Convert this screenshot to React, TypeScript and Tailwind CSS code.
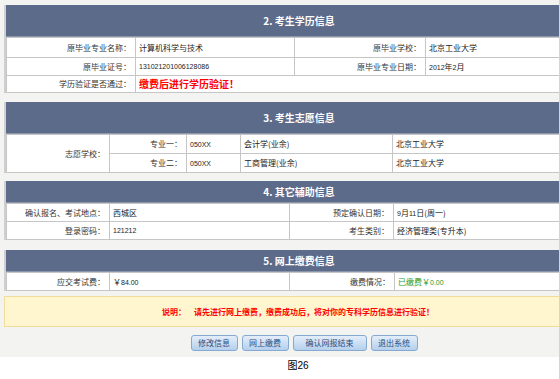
const cjk = { fontFamily: '"SimSun", "Noto Sans CJK SC", sans-serif' };

function Header({ title, tall }: { title: string; tall?: boolean }) {
  return (
    <div
      className={`flex items-center justify-center border-b border-[#8c96aa] bg-[#5d6b8b] text-[10px] font-bold leading-none text-white ${
        tall ? "h-[32px]" : "h-[22px]"
      }`}
    >
      {title}
    </div>
  );
}

const cell = "border border-[#c6c6c6] text-[8px] leading-none whitespace-nowrap";
const label = `${cell} pr-[4px] text-right text-[#333]`;
const value = `${cell} pl-[3px] text-left text-[#222]`;
const green = `${cell} pl-[3px] text-left text-[#1f9a1f]`;
const num = { fontFamily: '"Liberation Sans", sans-serif', fontSize: "7px" };

function Btn({ children, wide }: { children: string; wide?: boolean }) {
  return (
    <button
      className={`h-[16px] rounded-[3px] border border-[#86a9cf] bg-gradient-to-b from-[#e4eefa] to-[#b4cfec] text-[8px] leading-none text-[#2c4d7d] ${
        wide ? "w-[74px]" : "w-[47px]"
      }`}
    >
      {children}
    </button>
  );
}

export default function App() {
  return (
    <div className="h-[379px] w-[559px] overflow-hidden bg-white" style={cjk}>
      <div className="w-[596px] bg-[#f3f3f1] pb-[6px] pl-[4px] pt-[5px]">
        <div className="w-[588px]">
          {/* 2. 考生学历信息 */}
          <section className="border-l-2 border-[#cfcfcf] bg-white">
            <Header title="2. 考生学历信息" tall />
            <table className="w-full table-fixed border-collapse">
              <colgroup>
                <col className="w-[129px]" />
                <col className="w-[159px]" />
                <col className="w-[131px]" />
                <col />
              </colgroup>
              <tbody>
                <tr className="h-[20px]">
                  <td className={label}>原毕业专业名称：</td>
                  <td className={value}>计算机科学与技术</td>
                  <td className={label}>原毕业学校：</td>
                  <td className={value}>北京工业大学</td>
                </tr>
                <tr className="h-[18px]">
                  <td className={label}>原毕业证号：</td>
                  <td className={value} style={num}>131021201006128086</td>
                  <td className={label}>原毕业专业日期：</td>
                  <td className={value}>
                    <span style={num}>2012</span>年<span style={num}>2</span>月
                  </td>
                </tr>
                <tr className="h-[17px]">
                  <td className={label}>学历验证是否通过：</td>
                  <td className={value} colSpan={3}>
                    <span className="text-[10px] font-bold text-[#ff0000]">缴费后进行学历验证！</span>
                  </td>
                </tr>
              </tbody>
            </table>
          </section>

          {/* 3. 考生志愿信息 */}
          <section className="mt-[9px] border-l-2 border-[#cfcfcf] bg-white">
            <Header title="3. 考生志愿信息" tall />
            <table className="w-full table-fixed border-collapse">
              <colgroup>
                <col className="w-[103px]" />
                <col className="w-[77px]" />
                <col className="w-[54px]" />
                <col className="w-[152px]" />
                <col />
              </colgroup>
              <tbody>
                <tr className="h-[19px]">
                  <td className={label} rowSpan={2}>志愿学校：</td>
                  <td className={label}>专业一：</td>
                  <td className={value} style={num}>050XX</td>
                  <td className={value}>会计学(业余)</td>
                  <td className={value}>北京工业大学</td>
                </tr>
                <tr className="h-[19px]">
                  <td className={label}>专业二：</td>
                  <td className={value} style={num}>050XX</td>
                  <td className={value}>工商管理(业余)</td>
                  <td className={value}>北京工业大学</td>
                </tr>
              </tbody>
            </table>
          </section>

          {/* 4. 其它辅助信息 */}
          <section className="mt-[8px] border-l-2 border-[#cfcfcf] bg-white">
            <Header title="4. 其它辅助信息" />
            <table className="w-full table-fixed border-collapse">
              <colgroup>
                <col className="w-[103px]" />
                <col className="w-[180px]" />
                <col className="w-[104px]" />
                <col />
              </colgroup>
              <tbody>
                <tr className="h-[18px]">
                  <td className={label}>确认报名、考试地点：</td>
                  <td className={value}>西城区</td>
                  <td className={label}>预定确认日期：</td>
                  <td className={value}>
                    <span style={num}>9</span>月<span style={num}>11</span>日(周一)
                  </td>
                </tr>
                <tr className="h-[18px]">
                  <td className={label}>登录密码：</td>
                  <td className={value} style={num}>121212</td>
                  <td className={label}>考生类别：</td>
                  <td className={value}>经济管理类(专升本)</td>
                </tr>
              </tbody>
            </table>
          </section>

          {/* 5. 网上缴费信息 */}
          <section className="mt-[10px] border-l-2 border-[#cfcfcf] bg-white">
            <Header title="5. 网上缴费信息" />
            <table className="w-full table-fixed border-collapse">
              <colgroup>
                <col className="w-[103px]" />
                <col className="w-[180px]" />
                <col className="w-[105px]" />
                <col />
              </colgroup>
              <tbody>
                <tr className="h-[18px]">
                  <td className={label}>应交考试费：</td>
                  <td className={value}>
                    ￥<span style={num}>84.00</span>
                  </td>
                  <td className={label}>缴费情况：</td>
                  <td className={green}>
                    已缴费￥<span style={num}>0.00</span>
                  </td>
                </tr>
              </tbody>
            </table>
          </section>

          <div className="mt-[5px] flex h-[31px] items-center justify-center border border-[#f1dc9a] bg-[#fff6cf] text-[8px] font-bold leading-none text-[#ff0000]">
            <span className="mr-[8px]">说明：</span>
            <span>请先进行网上缴费，缴费成功后，将对你的专科学历信息进行验证！</span>
          </div>

          <div className="mt-[8px] flex justify-center gap-[4px] pl-[12px]">
            <Btn>修改信息</Btn>
            <Btn>网上缴费</Btn>
            <Btn wide>确认网报结束</Btn>
            <Btn>退出系统</Btn>
          </div>
        </div>
      </div>
      <div className="w-[596px] pt-[3px] text-center text-[10px] leading-none text-black">
        图<span style={{ fontFamily: '"Liberation Sans", sans-serif' }}>26</span>
      </div>
    </div>
  );
}
